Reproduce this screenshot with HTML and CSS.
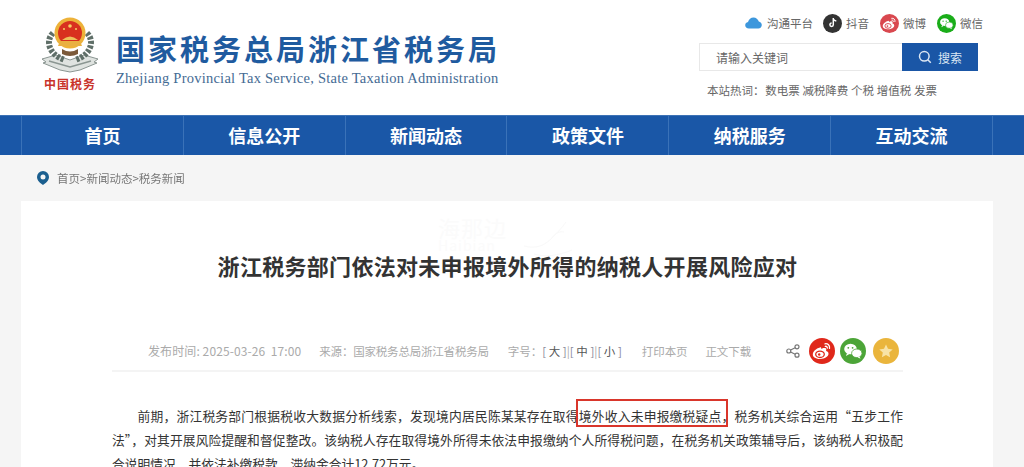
FILE: index.html
```html
<!DOCTYPE html>
<html lang="zh-CN">
<head>
  <meta charset="UTF-8">
  <meta name="viewport" content="width=device-width, initial-scale=1.0">
  <title>浙江税务部门依法对未申报境外所得的纳税人开展风险应对</title>
  <link rel="stylesheet" href="styles.css">
</head>
<body>
  <svg class="defs" width="0" height="0">
    <symbol id="i-weibo" viewBox="0 0 26 26">
      <path d="M11 9.500c-4 1-7.200 4.200-7.200 7 0 2.800 3.400 4.500 7.400 4.500 4.600 0 8.300-2.500 8.300-5.200 0-1.700-1.500-2.400-2.500-2.700.6-1.500.3-2.600-.6-3-1.200-.6-3.300.2-4 .8-.2-1.400-.6-1.800-1.400-1.400z" fill="#fff"/>
      <ellipse cx="11" cy="16.300" rx="4.300" ry="3.200" fill="none" stroke="currentColor" stroke-width="1.300"/>
      <circle cx="10.200" cy="16.500" r="1.200" fill="currentColor"/>
      <path d="M16 5.800c2.800-.5 5 1.700 4.500 4.600M16.300 8.300c1.300-.2 2.200.7 2 1.900" fill="none" stroke="#fff" stroke-width="1.300" stroke-linecap="round"/>
    </symbol>
    <symbol id="i-wechat" viewBox="0 0 26 26">
      <ellipse cx="10.500" cy="11" rx="6.300" ry="5.300" fill="#fff"/>
      <path d="M7 15l-1 3 3.400-2z" fill="#fff"/>
      <ellipse cx="16.800" cy="15.300" rx="5.200" ry="4.300" fill="#fff" stroke="currentColor" stroke-width=".8"/>
      <path d="M19.500 18.500l1 2.200-3-1.500z" fill="#fff"/>
      <circle cx="8.300" cy="9.800" r=".9" fill="currentColor"/>
      <circle cx="12.600" cy="9.800" r=".9" fill="currentColor"/>
    </symbol>
  </svg>

  <div class="page">
    <!-- Header -->
    <header class="header">
      <div class="logo">
        <div class="emblem">
          <svg width="60" height="60" viewBox="0 0 60 60">
            <path d="M2 44l14-4 14 5 14-5 14 4-4 3 3 1-17 7-10 2-10-2-17-7 3-1z" fill="#dfe3e0" stroke="#8b9692"/>
            <path d="M9 46l21 6 21-6" fill="none" stroke="#8b9692" stroke-width="1.500"/>
            <path d="M13 18C5 26 9 40 25 45M47 18c8 8 4 22-12 27" fill="none" stroke="#5f6f68" stroke-width="6" stroke-dasharray="3 1.500"/>
            <circle cx="30" cy="18" r="15.500" fill="#edb23a"/>
            <circle cx="30" cy="18" r="12" fill="#d8301f"/>
            <path d="M20 26h20l2 5H18z" fill="#e9b043"/>
            <path d="M22 25q8-7 16 0z" fill="#edc05a"/>
            <circle cx="30" cy="11" r="1.800" fill="#f4cf62"/>
            <circle cx="24" cy="14" r="1" fill="#f4cf62"/>
            <circle cx="36" cy="14" r="1" fill="#f4cf62"/>
            <path d="M22 34q8 5 16 0v5q-8 4-16 0z" fill="#7c5a3a"/>
          </svg>
          <span class="emblem-name">中国税务</span>
        </div>
        <div class="logo-text">
          <h1 class="logo-title">国家税务总局浙江省税务局</h1>
          <p class="logo-en">Zhejiang Provincial Tax Service, State Taxation Administration</p>
        </div>
      </div>

      <div class="tools">
        <div class="socials">
          <a class="social social-first">
            <svg width="17" height="12" viewBox="0 0 17 12"><path d="M4 11.500C1.600 11.500.2 10 .2 8.200c0-1.700 1.200-2.900 2.800-3.200C3.700 2.200 5.900.4 8.500.4c2.500 0 4.600 1.700 5.300 4.200 1.700.3 3 1.700 3 3.500 0 1.900-1.500 3.400-3.500 3.400z" fill="#3d97dc"/></svg>
            沟通平台
          </a>
          <a class="social">
            <span class="round round-dy">
              <svg width="12" height="12" viewBox="0 0 12 12"><path d="M6.300 1v6.800a1.700 1.700 0 1 1-1.700-1.700M6.300 1c.2 1.700 1.400 2.800 3 3" fill="none" stroke="#fff" stroke-width="1.500"/></svg>
            </span>
            抖音
          </a>
          <a class="social">
            <svg class="round round-wb" width="19" height="19"><use href="#i-weibo"/></svg>
            微博
          </a>
          <a class="social">
            <svg class="round round-wx" width="19" height="19"><use href="#i-wechat"/></svg>
            微信
          </a>
        </div>
        <form class="search">
          <input class="search-input" type="text" placeholder="请输入关键词">
          <button class="search-btn" type="button">
            <svg width="14" height="14" viewBox="0 0 14 14"><circle cx="6.300" cy="6.300" r="4.800" fill="none" stroke="#dbe6f3" stroke-width="1.500"/><path d="M9.800 9.800l3 3" stroke="#dbe6f3" stroke-width="1.500"/></svg>
            搜索
          </button>
        </form>
        <div class="hot">
          <span class="hot-label">本站热词：</span>
          <a>数电票</a><a>减税降费</a><a>个税</a><a>增值税</a><a>发票</a>
        </div>
      </div>
    </header>

    <!-- Menu -->
    <nav class="nav">
      <div class="nav-inner">
        <a href="#">首页</a>
        <a href="#">信息公开</a>
        <a href="#">新闻动态</a>
        <a href="#">政策文件</a>
        <a href="#">纳税服务</a>
        <a href="#">互动交流</a>
      </div>
    </nav>

    <div class="crumb">
      <svg width="12" height="14" viewBox="0 0 12 14"><path fill-rule="evenodd" d="M6 0a6 6 0 0 1 6 6c0 3.500-3.500 6.500-6 8-2.500-1.500-6-4.500-6-8a6 6 0 0 1 6-6zm0 3.500a2.500 2.500 0 1 0 0 5 2.500 2.500 0 0 0 0-5z" fill="#1b5f8f"/></svg>
      <span>首页&gt;新闻动态&gt;税务新闻</span>
    </div>

    <!-- Article -->
    <main class="article">
      <div class="watermark">
        海那边<small>Haibian</small>
        <svg class="watermark-mark" width="56" height="44" viewBox="0 0 56 44" fill="none" stroke="#f9f9f9"><path d="M2 30c12 3 20 0 28-8 4-4 10-10 14-16M30 22c3-5 8-7 12-6M12 38c10 3 24 2 38-4"/></svg>
      </div>
      <h2 class="article-title">浙江税务部门依法对未申报境外所得的纳税人开展风险应对</h2>
      <div class="meta">
        <span class="meta-date">发布时间: 2025-03-26&nbsp; 17:00</span>
        <span class="meta-source">来源：国家税务总局浙江省税务局</span>
        <span class="meta-size">字号：<b>[ <i>大</i> ]</b>|<b>[ <i>中</i> ]</b>|<b>[ <i>小</i> ]</b></span>
        <span class="meta-print">打印本页</span>
        <span class="meta-down">正文下载</span>
        <div class="share">
          <svg width="14" height="14" viewBox="0 0 14 14" fill="none" stroke="#777" stroke-width="1.200"><circle cx="2.800" cy="7" r="2"/><circle cx="11" cy="2.800" r="2"/><circle cx="11" cy="11.200" r="2"/><path d="M4.600 6l4.600-2.300M4.600 8l4.600 2.300"/></svg>
          <svg class="share-btn share-wb" width="26" height="26"><use href="#i-weibo"/></svg>
          <svg class="share-btn share-wx" width="26" height="26"><use href="#i-wechat"/></svg>
          <span class="share-btn share-star">
            <svg width="16" height="16" viewBox="0 0 16 16"><path d="M8 1.500l2 4.300 4.700.6-3.500 3.200.9 4.700L8 12l-4.100 2.300.9-4.700L1.300 6.400 6 5.800z" fill="#f8e3a6"/></svg>
          </span>
        </div>
      </div>
      <div class="content">
        <p>前期，浙江税务部门根据税收大数据分析线索，发现境内居民陈某某存在取得<span class="mark">境外收入未申报缴税疑点，</span>税务机关综合运用“五步工作法”，对其开展风险提醒和督促整改。该纳税人存在取得境外所得未依法申报缴纳个人所得税问题，在税务机关政策辅导后，该纳税人积极配合说明情况，并依法补缴税款，滞纳金合计12.72万元。</p>
      </div>
    </main>
  </div>
</body>
</html>
```

FILE: styles.css
```css
* {
  box-sizing: border-box;
}

html,
body {
  margin: 0;
  padding: 0;
  height: 467px;
  overflow: hidden;
}

body {
  font-family: "Noto Sans CJK SC", "Noto Sans", sans-serif;
  color: #333;
  background: #f5f5f5;
}

a {
  color: inherit;
  text-decoration: none;
}

.defs {
  display: block;
  height: 0;
}

/* the source picture is a soft, recompressed capture */
.page {
  height: 467px;
  overflow: hidden;
  filter: blur(.35px);
}

/* Header */
.header {
  height: 115px;
  background: #fff;
  display: flex;
  justify-content: space-between;
  padding: 15px 42px 0 40px;
}

.logo {
  display: flex;
  gap: 16px;
}

.emblem {
  width: 60px;
  display: flex;
  flex-direction: column;
  align-items: center;
}

.emblem-name {
  margin-top: 1px;
  font-size: 12px;
  line-height: 16px;
  font-weight: 700;
  letter-spacing: 1px;
  white-space: nowrap;
  color: #c8322a;
}

.logo-text {
  padding-top: 14px;
}

.logo-title {
  margin: 0;
  font-size: 29px;
  line-height: 38px;
  font-weight: 700;
  letter-spacing: 3px;
  color: #1f5b9f;
  white-space: nowrap;
}

.logo-en {
  margin: 2px 0 0;
  font-family: "Liberation Serif", serif;
  font-size: 14.5px;
  line-height: 18px;
  letter-spacing: .24px;
  color: #456b94;
  white-space: nowrap;
}

.tools {
  width: 283px;
}

.socials {
  display: flex;
  justify-content: flex-end;
  align-items: center;
  gap: 11px;
  height: 20px;
  margin: -2px -1px 0 0;
}

.social {
  display: flex;
  align-items: center;
  gap: 4px;
  font-size: 11.5px;
  color: #666;
}

.social-first {
  gap: 5px;
  margin-right: -1px;
}

.round {
  width: 19px;
  height: 19px;
  border-radius: 50%;
  display: flex;
  align-items: center;
  justify-content: center;
}

.round-dy {
  background: #333;
}

.round-wb {
  background: #d9484f;
  color: #d9484f;
}

.round-wx {
  background: #1aad19;
  color: #1aad19;
}

.search {
  display: flex;
  width: 279px;
  height: 28px;
  margin-top: 10px;
}

.search-input {
  flex: 1;
  min-width: 0;
  height: 28px;
  padding: 0 16px;
  border: 1px solid #e8e8e8;
  border-right: 0;
  outline: none;
  font: 12px "Noto Sans CJK SC", sans-serif;
}

.search-input::placeholder {
  color: #666;
  opacity: 1;
}

.search-btn {
  width: 76px;
  height: 28px;
  border: 0;
  background: #1a56a6;
  color: #dbe6f3;
  font: 12px "Noto Sans CJK SC", sans-serif;
  display: flex;
  align-items: center;
  justify-content: center;
  gap: 6px;
}

.hot {
  display: flex;
  margin-top: 10px;
  padding-left: 8px;
  gap: 2.7px;
  font-size: 11.5px;
  line-height: 18px;
  color: #666;
  white-space: nowrap;
}

.hot-label {
  margin-right: -2px;
}

/* Menu */
.nav {
  height: 40px;
  background: #1a57a7;
  border-top: 1px solid #3d72b5;
}

.nav-inner {
  margin: 0 31px 0 21px;
  display: grid;
  grid-template-columns: repeat(6, 1fr);
  height: 39px;
  border-right: 1px solid #3a72b8;
}

.nav-inner a {
  display: flex;
  align-items: center;
  justify-content: center;
  padding-bottom: 2px;
  border-left: 1px solid #3a72b8;
  color: #fff;
  font-size: 18px;
  font-weight: 700;
}

.crumb {
  height: 46px;
  display: flex;
  align-items: center;
  gap: 8px;
  padding-left: 37px;
  font-size: 11.5px;
  color: #777;
}

/* Article */
.article {
  position: relative;
  height: 266px;
  margin: 0 31px 0 21px;
  padding: 0 90px 0 91px;
  background: #fff;
}

.watermark {
  position: absolute;
  left: 417px;
  top: 15px;
  font-size: 22px;
  line-height: 22px;
  letter-spacing: 1px;
  color: #fbfbfb;
}

.watermark small {
  display: block;
  font-size: 14px;
  line-height: 14px;
}

.watermark-mark {
  position: absolute;
  left: 84px;
  top: 0;
}

.article-title {
  margin: 0;
  padding-top: 50px;
  font-size: 22px;
  line-height: 28px;
  letter-spacing: .3px;
  font-weight: 700;
  text-align: center;
  color: #333;
}

.meta {
  display: flex;
  align-items: center;
  height: 39px;
  margin-top: 54px;
  padding: 1px 0 3px 36px;
  font-size: 11.5px;
  color: #aaa;
  border-bottom: 2px solid #f4f4f4;
  white-space: nowrap;
}

.meta-date {
  font-size: 12px;
  letter-spacing: .1px;
}

.meta-source {
  margin-left: 18px;
  letter-spacing: -.2px;
}

.meta-size {
  margin-left: 19px;
}

.meta-size b {
  font-weight: 400;
  color: #889;
}

.meta-size i {
  font-style: normal;
  color: #555;
}

.meta-print {
  margin-left: 20px;
  letter-spacing: -.1px;
}

.meta-down {
  margin-left: 18px;
  letter-spacing: -.1px;
}

.share {
  display: flex;
  align-items: center;
  gap: 5px;
  margin-left: auto;
  margin-right: 4px;
}

.share-btn {
  width: 26px;
  height: 26px;
  border-radius: 50%;
  display: flex;
  align-items: center;
  justify-content: center;
}

.share-wb {
  background: #e0281b;
  color: #e0281b;
  margin-left: 4px;
}

.share-wx {
  background: #4ca538;
  color: #4ca538;
}

.share-star {
  background: #eab53c;
  margin-left: 2px;
}

.content {
  padding-top: 32px;
  font-size: 12.75px;
  line-height: 24px;
  color: #333;
}

.content p {
  margin: 0;
  text-indent: 2em;
  text-align: justify;
}

.mark {
  position: relative;
}

.mark::after {
  content: "";
  position: absolute;
  left: -3px;
  right: 6.5px;
  top: -7.5px;
  bottom: -1.5px;
  border: 2px solid #d9362b;
}
```
